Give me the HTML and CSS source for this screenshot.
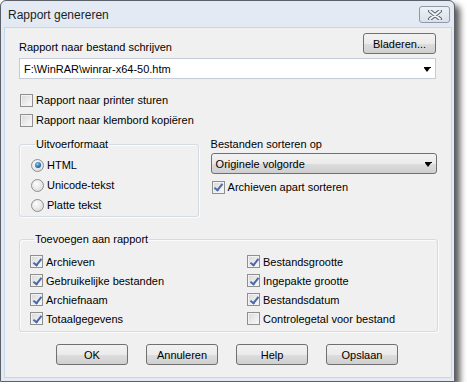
FILE: index.html
```html
<!DOCTYPE html>
<html>
<head>
  <meta charset="UTF-8" />
  <title>Rapport genereren</title>
  <link rel="stylesheet" href="styles.css">
</head>
<body>
  <div class="window">
    <div class="titlebar">
      <span class="title">Rapport genereren</span>
      <button class="close">
        <svg width="16" height="10" viewBox="0 0 16 10">
          <path d="M3 1 L13 9 M13 1 L3 9" stroke="#5b6270" stroke-width="4" stroke-linecap="round" />
          <path d="M3 1 L13 9 M13 1 L3 9" stroke="#f4f6f9" stroke-width="2" stroke-linecap="round" />
        </svg>
      </button>
    </div>
    <div class="client">
      <div class="file-head">
        <span class="lbl">Rapport naar bestand schrijven</span>
        <button class="btn browse">Bladeren...</button>
      </div>
      <div class="combo edit">
        <span>F:\WinRAR\winrar-x64-50.htm</span>
        <span class="arrow"></span>
      </div>

      <div class="opts">
        <div class="row"><span class="cb"></span>Rapport naar printer sturen</div>
        <div class="row"><span class="cb"></span>Rapport naar klembord kopiëren</div>
      </div>

      <div class="mid">
        <fieldset class="group fmt">
          <legend>Uitvoerformaat</legend>
          <div class="row"><span class="rb on"></span>HTML</div>
          <div class="row"><span class="rb"></span>Unicode-tekst</div>
          <div class="row"><span class="rb"></span>Platte tekst</div>
        </fieldset>
        <div class="sort">
          <div class="lbl">Bestanden sorteren op</div>
          <div class="combo list">
            <span>Originele volgorde</span>
            <span class="arrow"></span>
          </div>
          <div class="row"><span class="cb on"></span>Archieven apart sorteren</div>
        </div>
      </div>

      <fieldset class="group add">
        <legend>Toevoegen aan rapport</legend>
        <div class="grid">
          <div class="row"><span class="cb on"></span>Archieven</div>
          <div class="row"><span class="cb on"></span>Bestandsgrootte</div>
          <div class="row"><span class="cb on"></span>Gebruikelijke bestanden</div>
          <div class="row"><span class="cb on"></span>Ingepakte grootte</div>
          <div class="row"><span class="cb on"></span>Archiefnaam</div>
          <div class="row"><span class="cb on"></span>Bestandsdatum</div>
          <div class="row"><span class="cb on"></span>Totaalgegevens</div>
          <div class="row"><span class="cb"></span>Controlegetal voor bestand</div>
        </div>
      </fieldset>

      <div class="buttons">
        <button class="btn">OK</button>
        <button class="btn">Annuleren</button>
        <button class="btn">Help</button>
        <button class="btn">Opslaan</button>
      </div>
    </div>
  </div>
</body>
</html>
```

FILE: styles.css
```css
body { margin: 0; background: #ffffff; font-family: "Liberation Sans", Arial, sans-serif; font-size: 11px; color: #000; }

.window {
  width: 453px;
  height: 380px;
  border: 1px solid #5c6068;
  border-radius: 6px 6px 0 0;
  background: #e3eaf3;
  box-shadow: 5px 5px 6px rgba(0, 0, 0, 0.65);
  display: flex;
  flex-direction: column;
}

.titlebar {
  height: 26px;
  display: flex;
  align-items: center;
  justify-content: space-between;
  padding: 0 4px 0 7px;
}
.title { font-size: 12px; color: #1e1e1e; margin-top: 1px; }
.close {
  width: 31px;
  height: 17px;
  margin-top: 1px;
  padding: 0;
  border: 1px solid #8d98a8;
  border-radius: 3px;
  background: linear-gradient(#eef2f7, #d9e1ea);
  display: flex;
  align-items: center;
  justify-content: center;
}

.client {
  flex: 1;
  margin: 0 2px 3px 3px;
  border: 1px solid #c9d6e5;
  background: #f0f0f0;
  padding: 5px 14px 0 14px;
}

.btn {
  height: 21px;
  border: 1px solid #707070;
  border-radius: 3px;
  background: linear-gradient(#f2f2f2 0%, #ebebeb 50%, #dddddd 51%, #cfcfcf 100%);
  font-family: inherit;
  font-size: 11px;
  color: #000;
  padding: 0;
}

.file-head { display: flex; justify-content: space-between; align-items: flex-end; }
.file-head .lbl { padding-bottom: 1px; }
.browse { width: 73px; margin-right: 1px; }

.combo {
  height: 21px;
  box-sizing: border-box;
  display: flex;
  align-items: center;
  justify-content: space-between;
  padding: 0 5px 0 4px;
}
.combo.edit { margin-top: 4px; margin-right: 1px; background: #fff; border: 1px solid #c5ccd8; }
.combo.list { margin-top: 2px; border: 1px solid #707070; border-radius: 3px; background: linear-gradient(#f2f2f2 0%, #ebebeb 50%, #dddddd 51%, #cfcfcf 100%); }
.arrow {
  width: 0;
  height: 0;
  border-left: 3.5px solid transparent;
  border-right: 3.5px solid transparent;
  border-top: 4px solid #000;
  position: relative;
  top: 1px;
}
.arrow::before { content: ""; position: absolute; left: -3.5px; top: -5px; width: 7px; height: 1px; background: #000; }

.row { height: 20px; display: flex; align-items: center; }

.cb, .rb {
  width: 13px;
  height: 13px;
  box-sizing: border-box;
  margin-right: 3px;
  flex: none;
  position: relative;
}
.cb {
  border: 1px solid #8e8f8f;
  background: linear-gradient(135deg, #d8d8d8, #fbfbfb);
  box-shadow: inset 0 0 0 1px #f2f2f2;
}
.cb.on::after {
  content: "";
  position: absolute;
  left: 3.5px;
  top: 0.5px;
  width: 3px;
  height: 7px;
  border-right: 2px solid #4a68aa;
  border-bottom: 2px solid #4a68aa;
  transform: rotate(38deg);
}
.rb {
  border: 1px solid #8e8f8f;
  border-radius: 50%;
  background: radial-gradient(circle at 40% 35%, #fdfdfd, #d4d4d4);
}
.rb.on::after {
  content: "";
  position: absolute;
  left: 2.5px;
  top: 2.5px;
  width: 6px;
  height: 6px;
  border-radius: 50%;
  background: radial-gradient(circle at 40% 35%, #8fd0f5, #1d6aa8 60%, #0b3f74);
}

.opts { margin-top: 11px; margin-left: 1px; }

.group {
  margin: 0;
  border: 1px solid #d5dbe2;
  border-radius: 3px;
  box-shadow: inset 1px 1px 0 #fbfbfb, 1px 1px 0 #fbfbfb;
}
.group legend { padding: 0 1px; margin-left: 4px; line-height: 14px; }

.mid { margin-top: 7px; display: flex; align-items: flex-start; }
.fmt { width: 180px; height: 80px; box-sizing: border-box; padding: 4px 0 0 11px; }
.sort { margin-left: 12px; width: 227px; }
.sort .lbl { line-height: 14px; }
.sort .row { margin-top: 3px; margin-left: 1px; }

.add { margin-top: 15px; width: 419px; box-sizing: border-box; padding: 6px 0 3px 10px; }
.grid { display: grid; grid-template-columns: 217px 1fr; }
.grid .row { height: 19px; }

.buttons { margin-top: 12px; padding-left: 37px; display: flex; gap: 18px; }
.buttons .btn { width: 72px; }
```
